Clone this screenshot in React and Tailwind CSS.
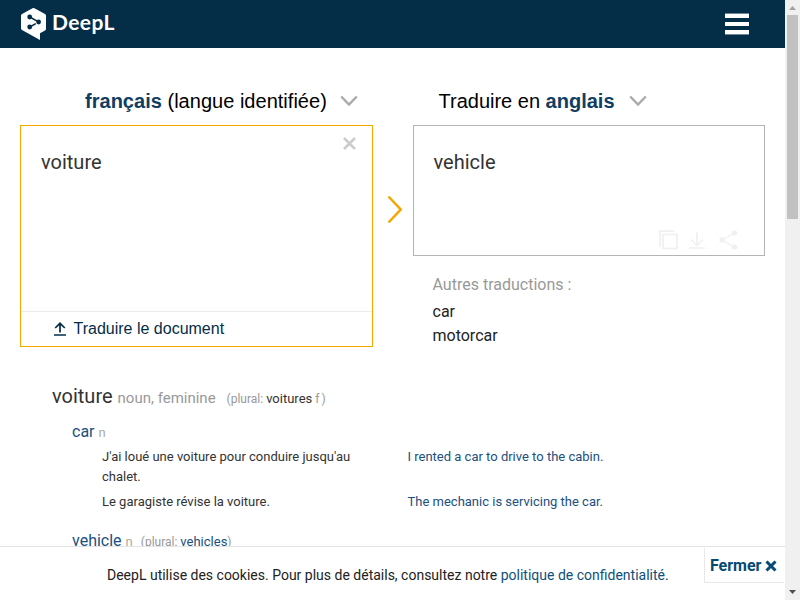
const roboto = "font-['Roboto',sans-serif]";
const arial = "font-['Liberation_Sans',sans-serif]";

function Logo() {
  return (
    <div className="flex items-start pl-[21px] pt-[8px]">
      <svg width="25" height="32" viewBox="0 0 25 32">
        <path d="M11.500.300Q12.500-.300 13.500.300L24 6.100Q25 6.700 25 7.800V20.800Q25 22 24 22.600L19 25.300V32L1 22Q0 21.400 0 20.300V7.800Q0 6.700 1 6.100Z" fill="#fff" />
        <path d="M8.800 9 17.500 13.900M8.800 19 14.800 15.600" fill="none" stroke="#042d48" strokeWidth="1.500" />
        <circle cx="8.700" cy="9" r="2.400" fill="#042d48" />
        <circle cx="17.600" cy="14" r="2.400" fill="#042d48" />
        <circle cx="8.700" cy="19" r="2.400" fill="#042d48" />
      </svg>
      <span className="ml-[6px] mt-[2px] font-['Lato',sans-serif] text-[21px] font-bold leading-[24px] tracking-[0.4px] text-white">DeepL</span>
    </div>
  );
}

function Chevron({ className }) {
  return (
    <svg className={className} width="18" height="12" viewBox="0 0 18 12" fill="none" stroke="#aaa" strokeWidth="2.400">
      <path d="M1.200 1.500 9 9.500 16.800 1.500" />
    </svg>
  );
}

function Source() {
  return (
    <section className="w-[353px]">
      <div className={`${arial} flex h-[47px] items-center pb-[2px] pl-[65px] text-[20px] text-black`}>
        <span className="whitespace-nowrap tracking-[0.02px]"><b className="text-[#0f3e62]">français</b> (langue identifiée)</span>
        <Chevron className="ml-[13.500px] shrink-0" />
      </div>
      <div className="flex h-[222px] flex-col border border-[#f7a600]">
        <div className="flex flex-1 justify-between">
          <span className={`${roboto} pl-[20px] pt-[24px] text-[20px] leading-[24px] text-[#333]`}>voiture</span>
          <svg className="mr-[16px] mt-[11px]" width="13" height="13" viewBox="0 0 13 13" stroke="#ccc" strokeWidth="2.600">
            <path d="M1 1 12 12M12 1 1 12" />
          </svg>
        </div>
        <div className={`${arial} flex h-[35px] items-center border-t border-[#ebebeb] pl-[33px] text-[16px] text-[#042d48]`}>
          <svg width="12" height="14" viewBox="0 0 12 14" fill="none" stroke="#042d48" strokeWidth="1.700">
            <path d="M6 10.500V1.500M1.200 6 6 1.300 10.800 6" />
            <path d="M0 13H12" stroke="#40627a" strokeWidth="2" />
          </svg>
          <span className="ml-[7.500px]">Traduire le document</span>
        </div>
      </div>
    </section>
  );
}

function Target() {
  return (
    <section className="w-[352px]">
      <div className={`${arial} flex h-[47px] items-center pb-[2px] pl-[25.500px] text-[20px] text-black`}>
        <span className="whitespace-nowrap">Traduire en <b className="text-[#0f3e62]">anglais</b></span>
        <Chevron className="ml-[14px] shrink-0" />
      </div>
      <div className="flex h-[131px] flex-col justify-between border border-[#b4b4b4]">
        <span className={`${roboto} pl-[19.500px] pt-[24px] text-[20px] leading-[24px] text-[#333]`}>vehicle</span>
        <div className="flex items-center pb-[5px] pl-[245px]">
          <svg width="19" height="20" viewBox="0 0 19 20" fill="none" stroke="#f0f0f0" strokeWidth="1.700">
            <path d="M1 17V1.200H15" />
            <rect x="4" y="4.500" width="14" height="14" />
          </svg>
          <svg className="ml-[11px]" width="16" height="20" viewBox="0 0 16 20" fill="none" stroke="#f0f0f0" strokeWidth="1.700">
            <path d="M8 1.500V15.500M2 9.500 8 15.500 14 9.500M0 18H16" />
          </svg>
          <svg className="ml-[14px]" width="19" height="20" viewBox="0 0 19 20" fill="#f0f0f0" stroke="#f0f0f0">
            <path d="M15.500 3 3 10 15.500 17.300" fill="none" strokeWidth="1.300" />
            <circle cx="15.500" cy="3" r="2.300" />
            <circle cx="3" cy="10" r="2.300" />
            <circle cx="15.500" cy="17.200" r="2.300" />
          </svg>
        </div>
      </div>
      <div className={`${roboto} pl-[19.500px] pt-[17px] text-[16px] leading-[24px] text-[#222]`}>
        <p className="mb-[3px] text-[#999]">Autres traductions :</p>
        <p>car</p>
        <p>motorcar</p>
      </div>
    </section>
  );
}

function Example({ source, target }) {
  return (
    <div className="mb-[5px] flex pl-[50px] text-[13px] leading-[20px]">
      <p className="w-[305.500px] pr-[50px] text-[#333]">{source}</p>
      <p className="text-[#205080]">{target}</p>
    </div>
  );
}

function Dictionary() {
  return (
    <section className={`${roboto} whitespace-nowrap pl-[52px] pt-[36px]`}>
      <h2 className="flex h-[24px] items-baseline text-[20px] leading-[24px] text-[#333]">
        voiture
        <span className="ml-[5px] text-[15px] text-[#999]">noun, feminine</span>
        <span className="ml-[11px] text-[12px] text-[#999]">(plural:</span>
        <span className="ml-[3px] text-[13px]">voitures</span>
        <span className="ml-[3px] text-[12px] text-[#999]">f</span>
        <span className="ml-[2px] text-[12px] text-[#999]">)</span>
      </h2>
      <div className="mt-[12px] flex h-[24px] items-baseline pl-[20px] text-[16px] leading-[24px] text-[#205080]">
        car<span className="ml-[4px] text-[13px] text-[#aaa]">n</span>
      </div>
      <div className="mt-[3px] whitespace-normal">
        <Example source="J'ai loué une voiture pour conduire jusqu'au chalet." target="I rented a car to drive to the cabin." />
        <Example source="Le garagiste révise la voiture." target="The mechanic is servicing the car." />
      </div>
      <div className="mt-[17px] flex h-[24px] items-baseline pl-[20px] text-[16px] leading-[24px] text-[#205080]">
        vehicle<span className="ml-[4px] text-[13px] text-[#aaa]">n</span>
        <span className="ml-[8px] text-[12px] text-[#999]">(plural:</span>
        <span className="ml-[3px] text-[13px]">vehicles</span>
        <span className="text-[12px] text-[#999]">)</span>
      </div>
    </section>
  );
}

function CookieBar() {
  return (
    <footer className={`${roboto} flex h-[54px] shrink-0 justify-between border-t border-[#e4e4e4] bg-white`}>
      <p className="whitespace-nowrap pl-[107px] pt-[18px] text-[14px] leading-[20px] text-[#222]">
        DeepL utilise des cookies. Pour plus de détails, consultez notre <a className="text-[#0f4f7c]">politique de confidentialité</a>.
      </p>
      <button className="mr-[1px] mt-[1px] flex h-[35px] w-[80px] items-center border-b border-l border-[#e8e8e8] pl-[5px] pt-[2px] text-[16px] font-bold text-[#044a75]">
        Fermer
        <svg className="ml-[4px] shrink-0" width="12" height="12" viewBox="0 0 12 12" stroke="#044a75" strokeWidth="3">
          <path d="M1.500 1.500 10.500 10.500M10.500 1.500 1.500 10.500" />
        </svg>
      </button>
    </footer>
  );
}

function Scrollbar() {
  return (
    <div className="flex w-[15px] flex-col items-center bg-[#f0f0f0]">
      <svg className="h-[15px] shrink-0" width="15" height="15"><path d="M4 10 7.500 6 11 10Z" fill="#a3a3a3" /></svg>
      <div className="h-[204px] w-[11px] shrink-0 bg-[#c1c1c1]" />
      <div className="flex-1" />
      <svg className="h-[15px] shrink-0" width="15" height="15"><path d="M4 5 11 5 7.500 9Z" fill="#505050" /></svg>
    </div>
  );
}

export default function App() {
  return (
    <div className="flex h-[600px] w-[800px] overflow-hidden bg-white">
      <div className="flex w-[785px] flex-col">
        <header className="flex h-[48px] shrink-0 justify-between bg-[#042d48]">
          <Logo />
          <div className="mr-[36px] mt-[13px] flex w-[24px] flex-col gap-[4px]">
            <i className="h-[5px] border-t border-[#6f8796] bg-white" />
            <i className="h-[4px] bg-white" />
            <i className="h-[5px] border-b border-[#6f8796] bg-white" />
          </div>
        </header>
        <main className="min-h-0 flex-1 overflow-hidden">
          <div className="flex pl-[20px] pt-[30px]">
            <Source />
            <svg className="ml-[14px] mr-[11px] mt-[117px]" width="15" height="29" viewBox="0 0 15 29" fill="none" stroke="#f7a600" strokeWidth="2.500">
              <path d="M1.500 1.500 13.700 14.500 1.500 27.500" />
            </svg>
            <Target />
          </div>
          <Dictionary />
        </main>
        <CookieBar />
      </div>
      <Scrollbar />
    </div>
  );
}
